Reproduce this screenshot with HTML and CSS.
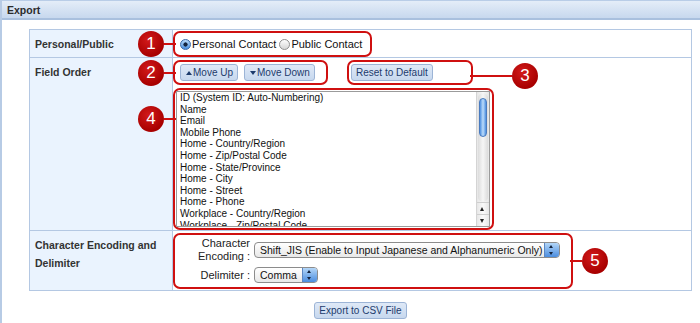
FILE: index.html
```html
<!DOCTYPE html>
<html lang="en">

<head>
    <meta charset="UTF-8">
    <meta name="viewport" content="width=device-width, initial-scale=1.0">
    <title>Export</title>
    <link rel="stylesheet" href="styles.css">
</head>

<body>
    <div class="panel">
        <div class="panel-head">Export</div>
        <div class="panel-body">
            <div class="form">
                <div class="label">Personal/Public</div>
                <div class="value value-type">
                    <div class="mark mark-type">
                        <span class="badge badge-left">1</span>
                        <label class="radio"><span class="radio-dot checked"></span>Personal Contact</label>
                        <label class="radio"><span class="radio-dot"></span>Public Contact</label>
                    </div>
                </div>

                <div class="label">Field Order</div>
                <div class="value value-order">
                    <div class="order-tools">
                        <div class="mark mark-move">
                            <span class="badge badge-left">2</span>
                            <button class="btn"><span class="tri tri-up"></span>Move Up</button>
                            <button class="btn"><span class="tri tri-down"></span>Move Down</button>
                        </div>
                        <div class="mark mark-reset">
                            <button class="btn">Reset to Default</button>
                            <span class="badge badge-right badge-3">3</span>
                        </div>
                    </div>
                    <!-- 字段顺序列表 -->
                    <div class="mark mark-list">
                        <span class="badge badge-left badge-4">4</span>
                        <div class="listbox">
                            <ul class="list-items">
                                <li>ID (System ID: Auto-Numbering)</li>
                                <li>Name</li>
                                <li>Email</li>
                                <li>Mobile Phone</li>
                                <li>Home - Country/Region</li>
                                <li>Home - Zip/Postal Code</li>
                                <li>Home - State/Province</li>
                                <li>Home - City</li>
                                <li>Home - Street</li>
                                <li>Home - Phone</li>
                                <li>Workplace - Country/Region</li>
                                <li>Workplace - Zip/Postal Code</li>
                                <li>Workplace - State/Province</li>
                            </ul>
                            <div class="scrollbar">
                                <div class="track"><div class="thumb"></div></div>
                                <div class="arrow arrow-up"></div>
                                <div class="arrow arrow-down"></div>
                            </div>
                        </div>
                    </div>
                </div>

                <div class="label">Character Encoding and Delimiter</div>
                <div class="value value-enc">
                    <div class="mark mark-enc">
                        <div class="enc-grid">
                            <div class="enc-label">Character<br>Encoding :</div>
                            <div class="select select-wide">
                                <span class="select-text">Shift_JIS (Enable to Input Japanese and Alphanumeric Only)</span>
                                <span class="stepper"></span>
                            </div>
                            <div class="enc-label">Delimiter :</div>
                            <div class="select select-short">
                                <span class="select-text">Comma</span>
                                <span class="stepper"></span>
                            </div>
                        </div>
                        <span class="badge badge-right badge-5">5</span>
                    </div>
                </div>
            </div>

            <div class="actions">
                <button class="btn btn-export">Export to CSV File</button>
            </div>
        </div>
    </div>
</body>

</html>
```

FILE: styles.css
```css
body {
    margin: 0;
    font-family: "Liberation Sans", Arial, sans-serif;
    color: #222;
    background-color: #fff;
}

.panel {
    border-left: 2px solid #b7cbe5;
    min-height: 323px;
}

.panel-head {
    height: 17px;
    line-height: 18px;
    padding-left: 5px;
    border-top: 1px solid #b9cde7;
    border-bottom: 2px solid #a9c0de;
    background: linear-gradient(#e4edf8, #c7d8ee);
    font-size: 10.5px;
    font-weight: bold;
    color: #2b2b2b;
}

.panel-body {
    padding: 9px 0 0 27px;
    width: 663px;
}

/* 表单表格 */
.form {
    display: grid;
    grid-template-columns: 143px 519px;
    border-top: 1px solid #b4c8e3;
    border-left: 1px solid #b4c8e3;
}

.label,
.value {
    box-sizing: border-box;
    border-right: 1px solid #b4c8e3;
    border-bottom: 1px solid #b4c8e3;
}

.label {
    background-color: #eaf3fe;
    padding: 5px 0 0 5px;
    font-size: 10.5px;
    font-weight: bold;
    line-height: 18px;
    color: #333;
}

.value-type {
    padding-top: 1px;
}

.value-order,
.value-enc {
    padding-top: 2px;
}

.value-enc {
    padding-bottom: 1px;
}

/* 红色标注框 */
.mark {
    position: relative;
    box-sizing: border-box;
    border: 2px solid #cf1010;
    border-radius: 7px;
}

.mark-type {
    width: 199px;
    height: 26px;
    display: flex;
    align-items: center;
    padding-left: 5px;
}

.order-tools {
    display: flex;
    gap: 19px;
    margin-bottom: 3px;
}

.mark-move {
    width: 155px;
    height: 25px;
    display: flex;
    align-items: center;
    gap: 6px;
    padding-left: 5px;
}

.mark-reset {
    width: 126px;
    height: 25px;
    display: flex;
    align-items: center;
    padding-left: 2px;
}

.mark-list {
    width: 321px;
    height: 142px;
}

.mark-enc {
    width: 400px;
    height: 56px;
}

.badge {
    position: absolute;
    top: 50%;
    margin-top: -13px;
    width: 26px;
    height: 26px;
    border-radius: 50%;
    background: radial-gradient(circle at 40% 35%, #d21a1a, #a80000 70%);
    color: #fff;
    font-size: 17px;
    line-height: 26px;
    text-align: center;
}

.badge::after {
    content: "";
    position: absolute;
    top: 12px;
    height: 2px;
    background-color: #cf1010;
}

.badge-left {
    left: -37px;
}

.badge-left::after {
    left: 100%;
    width: 12px;
}

.badge-right::after {
    right: 100%;
}

.badge-3 {
    left: calc(100% + 41px);
    margin-top: -10px;
}

.badge-3::after {
    width: 42px;
}

.badge-4 {
    top: 16px;
    margin-top: 0;
}

.badge-5 {
    left: calc(100% + 11px);
}

.badge-5::after {
    width: 12px;
}

/* 单选按钮 */
.radio {
    display: inline-flex;
    align-items: center;
    font-size: 11px;
    color: #111;
    margin-right: 3px;
}

.radio-dot {
    box-sizing: border-box;
    width: 11px;
    height: 11px;
    margin-right: 1px;
    border: 1px solid #8e8e8e;
    border-radius: 50%;
    background: linear-gradient(#fdfdfd, #d6d6d6);
}

.radio-dot.checked {
    border-color: #3a69a8;
    background: radial-gradient(circle, #14243f 0 1.8px, transparent 2.4px), linear-gradient(#b9dbfa, #4b8fe0);
}

/* 按钮 */
.btn {
    display: inline-flex;
    align-items: center;
    box-sizing: border-box;
    height: 17px;
    margin: 0;
    padding: 0 4px;
    border: 1px solid #9cb4d6;
    border-radius: 3px;
    background: linear-gradient(#dfe9f7, #c7d8ee);
    font-family: "Liberation Sans", Arial, sans-serif;
    font-size: 10px;
    color: #1d3b6c;
    cursor: pointer;
}

.tri {
    width: 0;
    height: 0;
    margin: 0 1px 0 1px;
    border-left: 3px solid transparent;
    border-right: 3px solid transparent;
}

.tri-up {
    border-bottom: 4px solid #1d3b6c;
}

.tri-down {
    border-top: 4px solid #1d3b6c;
}

/* 列表框 */
.listbox {
    display: flex;
    box-sizing: border-box;
    width: 314px;
    height: 136px;
    margin: 1px 0 0 1px;
    border: 1px solid #9b9b9b;
    background-color: #fff;
    overflow: hidden;
}

.list-items {
    flex: 1;
    margin: 0;
    padding: 0 0 0 3px;
    list-style: none;
    font-size: 10px;
    line-height: 11.6px;
    color: #111;
    white-space: nowrap;
    overflow: hidden;
}

.scrollbar {
    display: flex;
    flex-direction: column;
    width: 12px;
    border-left: 1px solid #d4d4d4;
    background: linear-gradient(to right, #e6e6e6, #fafafa 50%, #e6e6e6);
}

.track {
    flex: 1;
    margin: 1px 1px 0;
    padding-top: 5px;
    border-radius: 5px;
    background: linear-gradient(to right, #dcdcdc, #f6f6f6 50%, #dcdcdc);
}

.thumb {
    width: 8px;
    height: 39px;
    margin: 0 auto;
    border-radius: 4px;
    border: 1px solid #4a7bbf;
    box-sizing: border-box;
    background: linear-gradient(to right, #4d8fe0, #bcdcfb 50%, #4d8fe0);
}

.arrow {
    position: relative;
    height: 11px;
    border-top: 1px solid #cfcfcf;
}

.arrow::after {
    content: "";
    position: absolute;
    left: 3px;
    top: 4px;
    border-left: 2.5px solid transparent;
    border-right: 2.5px solid transparent;
}

.arrow-up::after {
    border-bottom: 4px solid #222;
}

.arrow-down::after {
    border-top: 4px solid #222;
}

/* 编码与分隔符 */
.enc-grid {
    display: grid;
    grid-template-columns: 75px auto;
    column-gap: 4px;
    row-gap: 4px;
    align-items: center;
    padding-top: 2px;
}

.enc-label {
    text-align: right;
    font-size: 11px;
    line-height: 13px;
    color: #222;
}

.select {
    display: flex;
    align-items: center;
    justify-self: start;
    box-sizing: border-box;
    height: 16px;
    border: 1px solid #8c8c8c;
    border-radius: 4px;
    background: linear-gradient(#ffffff, #e8e8e8);
    overflow: hidden;
}

.select-wide {
    width: 306px;
}

.select-short {
    width: 64px;
}

.select-text {
    flex: 1;
    padding-left: 5px;
    font-size: 10.5px;
    color: #111;
    white-space: nowrap;
    overflow: hidden;
}

.stepper {
    position: relative;
    align-self: stretch;
    width: 14px;
    border-left: 1px solid #5a86c2;
    background: linear-gradient(#b3d6f8, #4b8ddf);
}

.stepper::before,
.stepper::after {
    content: "";
    position: absolute;
    left: 4px;
    border-left: 2.5px solid transparent;
    border-right: 2.5px solid transparent;
}

.stepper::before {
    top: 2px;
    border-bottom: 3px solid #14243f;
}

.stepper::after {
    bottom: 2px;
    border-top: 3px solid #14243f;
}

.actions {
    padding-top: 9px;
    text-align: center;
}

.btn-export {
    padding: 0 4px;
}
```
